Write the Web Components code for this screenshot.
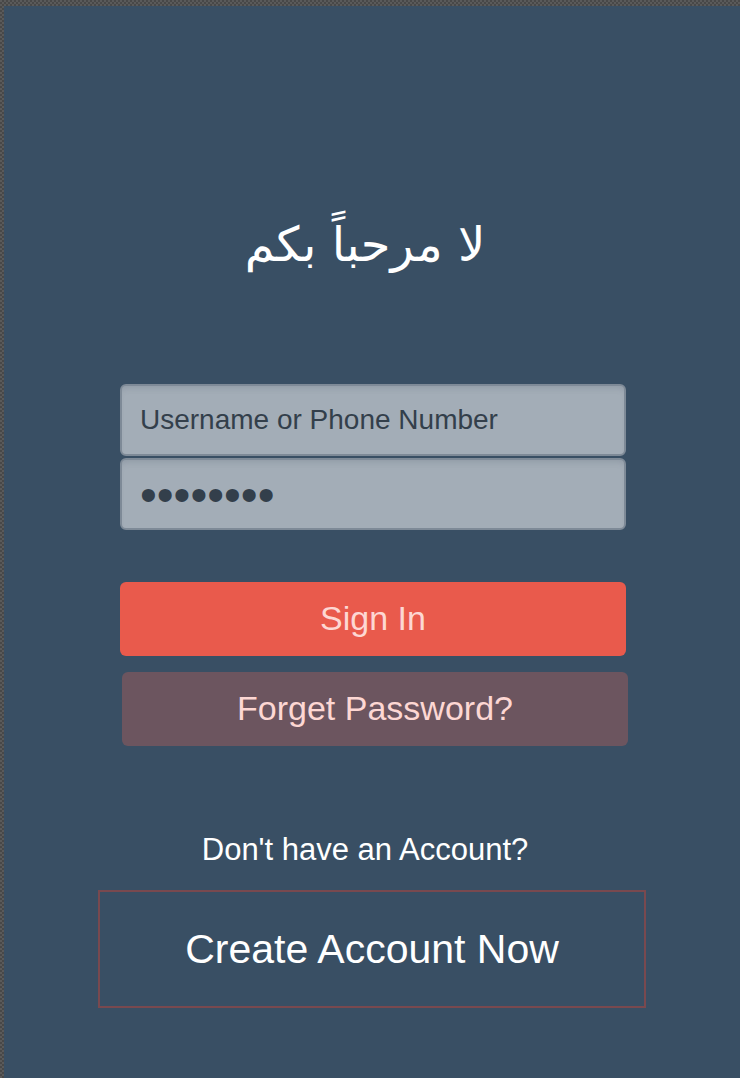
<!DOCTYPE html>
<html lang="en">
<head>
<meta charset="utf-8">
<meta name="viewport" content="width=device-width, initial-scale=1">
<title>Sign In</title>
<style>
  html, body { margin: 0; min-height: 100%; background: #394f64; }
  body { font-family: "Liberation Sans", Arial, sans-serif; }
</style>
</head>
<body>
<login-screen>
  <welcome-title slot="title">لا مرحباً بكم</welcome-title>
  <text-field name="username" type="text" label="Username or Phone Number"></text-field>
  <text-field name="password" type="password" label="Password" value="password"></text-field>
  <action-button slot="actions" kind="primary">Sign In</action-button>
  <action-button slot="actions" kind="muted">Forget Password?</action-button>
  <sign-up-prompt slot="footer" question="Don't have an Account?">Create Account Now</sign-up-prompt>
</login-screen>

<script>
class LoginScreen extends HTMLElement {
  constructor() {
    super();
    this.attachShadow({ mode: 'open' }).innerHTML = `
      <style>
        :host {
          display: block; box-sizing: border-box; min-height: 100vh;
          padding: 6px 0 0 4px;
          background: repeating-conic-gradient(#484848 0 25%, #5a5a5a 0 50%) 0 0 / 4px 4px;
        }
        main {
          box-sizing: border-box; min-height: calc(100vh - 6px);
          display: flex; flex-direction: column;
          padding: 188px 0 70px;
          background: #394f64;
        }
        .fields { display: grid; gap: 2px; padding: 0 114px 0 116px; margin-top: 90px; }
        .actions { display: grid; gap: 16px; padding: 0 114px 0 116px; margin-top: 52px; }
      </style>
      <main>
        <slot name="title"></slot>
        <div class="fields"><slot></slot></div>
        <div class="actions"><slot name="actions"></slot></div>
        <slot name="footer"></slot>
      </main>`;
  }
}

class WelcomeTitle extends HTMLElement {
  constructor() {
    super();
    this.attachShadow({ mode: 'open' }).innerHTML = `
      <style>
        :host { display: block; padding-right: 14px; }
        h1 {
          margin: 0; text-align: center; color: #fff;
          font: 400 48px/100px "DejaVu Sans", sans-serif;
        }
      </style>
      <h1 dir="rtl" lang="ar"><slot></slot></h1>`;
  }
}

class TextField extends HTMLElement {
  constructor() {
    super();
    this.attachShadow({ mode: 'open' }).innerHTML = `
      <style>
        :host { display: block; }
        input {
          display: block; box-sizing: border-box; width: 100%; height: 72px;
          margin: 0; padding: 0 18px;
          border: 2px solid #7e8a97; border-radius: 6px; outline: none;
          background: #a3adb7; color: #333f4b;
          box-shadow: inset 0 6px 6px -4px rgba(70, 80, 100, .2);
          font: 28px "Liberation Sans", Arial, sans-serif;
        }
        input::placeholder { color: #333f4b; opacity: 1; }
        input[type=password] { font-size: 48px; }
      </style>
      <input>`;
    const input = this.shadowRoot.querySelector('input');
    const label = this.getAttribute('label');
    input.type = this.getAttribute('type');
    input.name = this.getAttribute('name');
    input.setAttribute('aria-label', label);
    if (this.hasAttribute('value')) input.value = this.getAttribute('value');
    else input.placeholder = label;
  }
}

class ActionButton extends HTMLElement {
  constructor() {
    super();
    this.attachShadow({ mode: 'open' }).innerHTML = `
      <style>
        :host { display: block; }
        :host([kind=muted]) { margin: 0 -2px 0 2px; }
        button {
          display: block; width: 100%; height: 74px; margin: 0; padding: 0 0 2px;
          border: 0; border-radius: 6px;
          background: #e95a4c; color: #fdd7d3; cursor: pointer;
          font: 34px "Liberation Sans", Arial, sans-serif;
        }
        :host([kind=muted]) button { background: #6c555f; }
      </style>
      <button type="button"><slot></slot></button>`;
  }
}

class SignUpPrompt extends HTMLElement {
  constructor() {
    super();
    this.attachShadow({ mode: 'open' }).innerHTML = `
      <style>
        :host { display: block; margin-top: 84px; padding: 0 94px; color: #fff; }
        p { margin: 0 0 20px; padding-right: 14px; text-align: center; font-size: 31px; line-height: 40px; }
        a {
          display: block; padding: 32px 0; border: 2px solid #79494f;
          text-align: center; text-decoration: none; color: #fff;
          font-size: 41px; line-height: 50px;
        }
      </style>
      <p></p>
      <a href="#create-account"><slot></slot></a>`;
    this.shadowRoot.querySelector('p').textContent = this.getAttribute('question');
  }
}

customElements.define('login-screen', LoginScreen);
customElements.define('welcome-title', WelcomeTitle);
customElements.define('text-field', TextField);
customElements.define('action-button', ActionButton);
customElements.define('sign-up-prompt', SignUpPrompt);
</script>
</body>
</html>
